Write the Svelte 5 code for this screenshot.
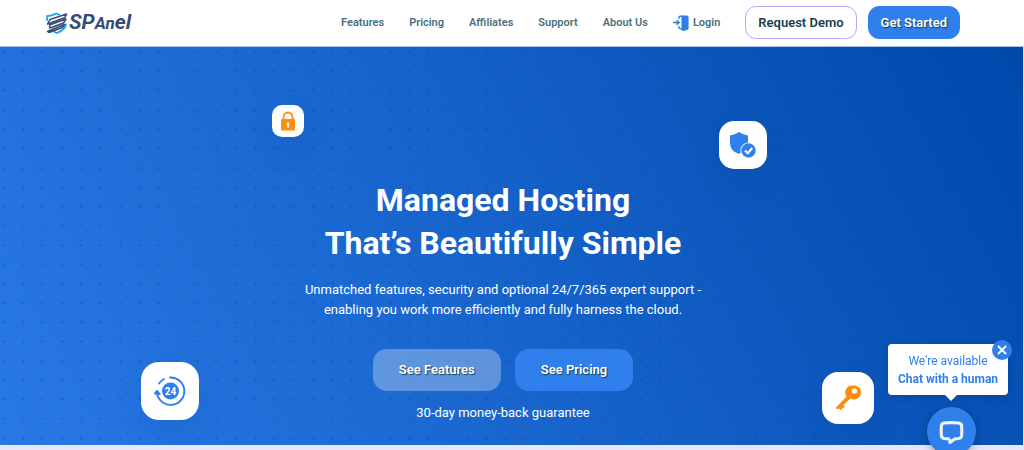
<script>
    const links = ['Features', 'Pricing', 'Affiliates', 'Support', 'About Us'];

    let chatOpen = $state(true);
</script>

<div class="page">
    <header class="header">
        <div class="bar">
            <a class="logo" href="/" aria-label="SPanel home">
                <svg class="logo-mark" viewBox="0 0 22 22" aria-hidden="true">
                    <path d="M1.200 9V4.200Q6 3.800 10 1.500L14 3M20 11.500Q20 17.500 11 21L7.500 19.500" fill="none" stroke="#16a5f3" stroke-width="1.800" />
                    <path d="M4 7.500L20.500 2L19 5.500L1.500 12ZM3.500 13L20 7L17.500 11L4 16ZM1.500 19.500L18.500 12.500L16.500 15.500L3 20.500Z" fill="#fff" stroke="#384b76" stroke-width="1.500" stroke-linejoin="round" />
                </svg>
                <span class="logo-text">SP<small>An</small>el</span>
            </a>

            <nav class="nav">
                {#each links as link}
                    <a href="#{link.toLowerCase().replace(' ', '-')}">{link}</a>
                {/each}
                <a class="login" href="#login">
                    <svg viewBox="0 0 16 16" aria-hidden="true">
                        <path d="M8.500 1.200Q8.600.6 9.500.5H14Q15.600.5 15.600 2V13Q15.600 14.400 14.500 14.800L10.500 15.900Q8.500 16 8.500 14.500Z" fill="#2f80ed" />
                        <path d="M10 1.200H7.200Q5.900 1.200 5.900 2.500V4M5.900 11V12.600Q5.900 13.700 7.200 13.700H9M0 7.500H5" fill="none" stroke="#2f80ed" stroke-width="1.400" />
                        <path d="M3.500 4.200L7.300 7.500L3.500 10.800Z" fill="#2f80ed" />
                    </svg>
                    Login
                </a>
            </nav>

            <div class="actions">
                <a class="btn btn-outline" href="#demo">Request Demo</a>
                <a class="btn btn-primary" href="#start">Get Started</a>
            </div>
        </div>
    </header>

    <main class="hero">
        <div class="tile tile-lock">
            <svg viewBox="0 0 32 32" aria-hidden="true">
                <path d="M11.500 15V12A4.500 4.500 0 0 1 20.500 12V15" fill="none" stroke="#ff8c0a" stroke-width="1.800" />
                <rect x="9" y="14" width="14" height="11.500" rx="1" fill="#ff8c0a" />
                <circle cx="16" cy="19" r="1.400" fill="#fff" />
                <path d="M15.400 19H16.600L17 22.500H15Z" fill="#fff" />
            </svg>
        </div>
        <div class="tile tile-shield">
            <svg viewBox="0 0 48 48" aria-hidden="true">
                <path d="M20 11Q24 14 29 14.500V21.500A8.500 8.500 0 0 0 21.500 32L20 33Q11 30 11 22V14.500Q16 14 20 11Z" fill="#2f80ed" />
                <circle cx="29.500" cy="29.500" r="7.200" fill="#2f80ed" />
                <path d="M26 29.500L28.700 32.200L33.300 27" fill="none" stroke="#fff" stroke-width="2" />
            </svg>
        </div>
        <div class="tile tile-support">
            <svg viewBox="0 0 58 58" aria-hidden="true">
                <path d="M29 15.500A13.700 13.700 0 1 1 16.200 32" fill="none" stroke="#2f80ed" stroke-width="1.900" stroke-linecap="round" />
                <path d="M18 21.500Q20 18.500 23 17" fill="none" stroke="#2f80ed" stroke-width="1.900" stroke-linecap="round" />
                <path d="M16 27.500L19.500 31.500Q20 33 18.500 33L14 32.500Q12.500 32 13 31Z" fill="#2f80ed" />
                <circle cx="29.500" cy="29" r="8.500" fill="#2f80ed" />
                <text x="29.500" y="32.500" text-anchor="middle">24</text>
            </svg>
        </div>
        <div class="tile tile-key">
            <svg viewBox="0 0 52 52" aria-hidden="true">
                <path d="M31 13.500A7 7 0 1 1 28.500 26.500L21.500 33L23 34.500L21 36.500L19.500 35.500L20 37L18.500 38L17 36.500L15 37.500L14 35.500L24.500 24.500A7 7 0 0 1 31 13.500Z" fill="#ff8c0a" />
                <circle cx="32.500" cy="19" r="2.600" fill="#fff" />
            </svg>
        </div>

        <div class="hero-content">
            <h1>Managed Hosting<br />That’s Beautifully Simple</h1>
            <p class="lead">
                Unmatched features, security and optional 24/7/365 expert support -<br />
                enabling you work more efficiently and fully harness the cloud.
            </p>
            <div class="cta">
                <a class="btn-large" href="#features">See Features</a>
                <a class="btn-large btn-blue" href="#pricing">See Pricing</a>
            </div>
            <p class="guarantee">30-day money-back guarantee</p>
        </div>
    </main>

    <aside class="chat">
        {#if chatOpen}
            <div class="bubble">
                <span>We're available</span>
                <strong>Chat with a human</strong>
                <button class="close" aria-label="Close" onclick={() => (chatOpen = false)}>
                    <svg viewBox="0 0 20 20" aria-hidden="true">
                        <path d="M6 6L14 14M14 6L6 14" stroke="#fff" stroke-width="1.800" />
                    </svg>
                </button>
            </div>
        {/if}
        <button class="launcher" aria-label="Open chat" onclick={() => (chatOpen = true)}>
            <svg viewBox="0 0 24 24" aria-hidden="true">
                <path d="M10.500 19.500V22.500L15 19.200Q17 18.800 19 18.700Q21.400 18.400 21.700 16Q22.100 11 21.700 6.500Q21.400 4 19 3.800Q12 3.200 5 3.800Q2.600 4 2.300 6.500Q1.900 11 2.300 16Q2.600 18.400 5 18.700L10.500 19.200" fill="none" stroke="#f2f2f2" stroke-width="3" stroke-linejoin="round" />
            </svg>
        </button>
    </aside>
</div>

<style>
    :global(body) {
        margin: 0;
        background: #e8e6fd;
    }
    .page {
        font-family: Roboto, 'Open Sans', sans-serif;
        color: #fff;
        overflow: hidden;
    }
    a {
        text-decoration: none;
    }
    .header {
        background: #fff;
        border-bottom: 1px solid #a9c4ec;
        padding: 6px 64px 7px 46px;
    }
    .bar {
        display: flex;
        align-items: center;
    }
    .logo {
        display: flex;
        align-items: center;
        gap: 1px;
        margin-right: auto;
        color: #384b76;
    }
    .logo-mark {
        width: 22px;
        height: 22px;
    }
    .logo-text {
        font: italic 700 21px/24px Roboto, sans-serif;
    }
    .logo-text small {
        font-size: 17px;
    }
    .nav {
        display: flex;
        align-items: center;
        gap: 25px;
        margin-right: 25px;
    }
    .nav a {
        color: #4a6f80;
        font-size: 11px;
        font-weight: 600;
        line-height: 16px;
    }
    .login {
        display: flex;
        align-items: center;
        gap: 4px;
    }
    .login svg {
        width: 16px;
        height: 16px;
    }
    .actions {
        display: flex;
        gap: 11px;
    }
    .btn {
        box-sizing: border-box;
        border: 1px solid #b3acf8;
        border-radius: 11px;
        padding: 7px 12px;
        font-size: 13px;
        font-weight: 600;
        line-height: 17px;
    }
    .btn-outline {
        color: #173f50;
    }
    .btn-primary {
        background: #2f80ed;
        border-color: #2f80ed;
        color: #fff;
        text-shadow: 1px 1px 1px #173f50;
    }
    .hero {
        position: relative;
        margin-right: 1px;
        padding: 132px 17px 22px 0;
        background:
            url("data:image/svg+xml,%3Csvg xmlns='http://www.w3.org/2000/svg' viewBox='0 0 19 19'%3E%3Ccircle cx='4' cy='5' r='1.300' fill='%23003c96' fill-opacity='.25'/%3E%3C/svg%3E") 0 0 / calc(100% / 53),
            linear-gradient(62deg, #2979e5 0%, #1562ca 50%, #0048aa 100%);
    }
    .hero-content {
        display: flex;
        flex-direction: column;
        align-items: center;
        text-align: center;
    }
    h1 {
        margin: 0;
        font-size: 32px;
        font-weight: 700;
        line-height: 43px;
    }
    .lead {
        margin: 15px 0 29px;
        font-size: 13px;
        line-height: 20px;
    }
    .cta {
        display: flex;
        gap: 14px;
    }
    .btn-large {
        padding: 11px 26px;
        border-radius: 14px;
        background: rgba(255, 255, 255, 0.3);
        color: #fff;
        font-size: 13px;
        font-weight: 600;
        line-height: 20px;
        text-shadow: 1px 1px 1px #173f50;
    }
    .btn-blue {
        background: #2f80ed;
    }
    .guarantee {
        margin: 12px 0 0;
        font-size: 13px;
        line-height: 20px;
    }
    .tile {
        position: absolute;
        background: #fff;
        box-shadow: 0 12px 28px rgba(0, 50, 140, 0.12);
    }
    .tile svg {
        display: block;
        width: 100%;
        height: 100%;
    }
    .tile text {
        font-size: 10px;
        font-weight: 700;
        fill: #fff;
    }
    .tile-lock {
        top: 58px;
        left: 26.6%;
        width: 32px;
        height: 32px;
        border-radius: 10px;
    }
    .tile-shield {
        top: 74px;
        left: 70.3%;
        width: 48px;
        height: 48px;
        border-radius: 15px;
    }
    .tile-support {
        top: 315px;
        left: 13.8%;
        width: 58px;
        height: 58px;
        border-radius: 18px;
    }
    .tile-key {
        top: 325px;
        left: 80.4%;
        width: 52px;
        height: 52px;
        border-radius: 16px;
    }
    .chat {
        position: fixed;
        right: 16px;
        bottom: -6px;
        display: flex;
        flex-direction: column;
        align-items: flex-end;
    }
    .bubble {
        position: relative;
        display: flex;
        flex-direction: column;
        align-items: center;
        box-sizing: border-box;
        min-width: 120px;
        margin-bottom: 12px;
        padding: 8px 9px 7px;
        border-radius: 4px;
        background: #fff;
        color: #2f80ed;
        font-size: 12px;
        line-height: 18px;
        white-space: nowrap;
        box-shadow: 0 2px 8px rgba(0, 0, 0, 0.15);
    }
    .bubble::after {
        content: '';
        position: absolute;
        top: 100%;
        right: 51px;
        border: 6px solid transparent;
        border-top-color: #fff;
        border-bottom: 0;
    }
    button {
        padding: 0;
        border: 0;
        border-radius: 50%;
        background: #2f80ed;
        cursor: pointer;
    }
    button svg {
        display: block;
        width: 100%;
        height: 100%;
    }
    .close {
        position: absolute;
        top: -4px;
        right: -4px;
        width: 20px;
        height: 20px;
    }
    .launcher {
        width: 49px;
        height: 49px;
        margin-right: 32px;
        padding: 12px;
        box-shadow: 0 2px 8px rgba(0, 0, 0, 0.3);
    }
</style>
